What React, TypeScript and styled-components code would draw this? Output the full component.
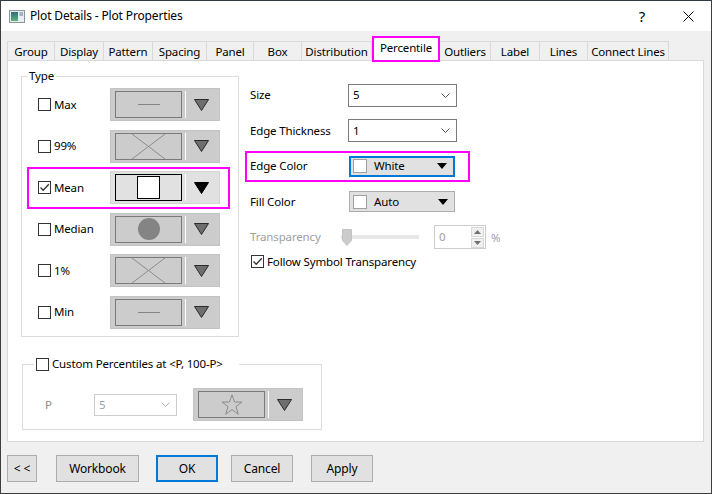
import React from "react";
import styled, { createGlobalStyle } from "styled-components";

const MAGENTA = "#ff00ff";
const FOCUS = "#0078d7";

const GlobalStyle = createGlobalStyle`
  html, body {
    margin: 0;
    padding: 0;
    background: #ffffff;
  }
  body {
    font-family: "Noto Sans", "Liberation Sans", sans-serif;
    font-size: 11.5px;
    letter-spacing: -0.15px;
    color: #000;
  }
  * {
    box-sizing: border-box;
  }
`;

const Window = styled.div`
    width: 712px;
    height: 494px;
    display: flex;
    flex-direction: column;
    background: #f0f0f0;
    border: 1px solid #3d3d3d;
    border-top-color: #2f3d44;
    overflow: hidden;
`;

const TitleBar = styled.div`
    height: 30px;
    flex-shrink: 0;
    background: #ffffff;
    display: flex;
    align-items: center;
    padding-left: 8px;
`;

const TitleText = styled.span`
    margin-left: 5px;
    flex: 1;
    line-height: 16px;
    font-size: 12px;
`;

const CaptionButton = styled.div`
    width: 46px;
    height: 30px;
    display: flex;
    align-items: center;
    justify-content: center;
    font-size: 15px;
`;

const Body = styled.div`
    flex: 1;
    display: flex;
    flex-direction: column;
    padding: 5px 7px 0 6px;
`;

const TabStrip = styled.div`
    display: flex;
    align-items: flex-end;
    height: 24px;
    position: relative;
    z-index: 1;
`;

const Tab = styled.div<{ $w: number; $first?: boolean }>`
    width: ${(p) => p.$w}px;
    height: 19px;
    border: 1px solid #d9d9d9;
    border-bottom: none;
    border-left-width: ${(p) => (p.$first ? 1 : 0)}px;
    background: #f0f0f0;
    display: flex;
    align-items: center;
    justify-content: center;
    padding-top: 1px;
    line-height: 16px;
    white-space: nowrap;
`;

const ActiveTab = styled.div<{ $w: number }>`
    width: ${(p) => p.$w}px;
    height: 26px;
    margin-bottom: -2px;
    border: 2px solid ${MAGENTA};
    background: #ffffff;
    display: flex;
    align-items: center;
    justify-content: center;
    padding-bottom: 2px;
    line-height: 16px;
`;

const Panel = styled.div`
    height: 382px;
    flex-shrink: 0;
    background: #ffffff;
    border: 1px solid #d9d9d9;
    padding: 7px 0 0 13px;
    display: flex;
    flex-direction: column;
    align-items: flex-start;
`;

const TopSection = styled.div`
    display: flex;
    align-items: flex-start;
`;

const GroupBox = styled.fieldset<{ $w: number }>`
    width: ${(p) => p.$w}px;
    margin: 0;
    border: 1px solid #dcdcdc;
    min-width: 0;
`;

const TypeGroup = styled(GroupBox)`
    padding: 0 8px 3px 5px;
`;

const CustomGroup = styled(GroupBox)`
    margin: 19px 0 0 1px;
    padding: 16px 0 8px 11px;
`;

const Legend = styled.legend<{ $padRight?: number }>`
    padding: 0 ${(p) => p.$padRight ?? 2}px 0 2px;
    line-height: 16px;
    display: flex;
    align-items: center;
`;

const TypeRow = styled.div<{ $hl?: boolean }>`
    height: 41.5px;
    display: flex;
    align-items: center;
    padding: ${(p) => (p.$hl ? "0 8px 0 9px" : "0 10px 0 11px")};
    border: ${(p) => (p.$hl ? `2px solid ${MAGENTA}` : "none")};
`;

const CheckLabel = styled.label<{ $disabled?: boolean }>`
    display: flex;
    align-items: center;
    gap: 3px;
    line-height: 16px;
    white-space: nowrap;
    color: ${(p) => (p.$disabled ? "#a0a0a0" : "#000")};
`;

const Box = styled.span`
    width: 13px;
    height: 13px;
    flex-shrink: 0;
    border: 1px solid #333333;
    background: #ffffff;
    display: flex;
    align-items: center;
    justify-content: center;
`;

const Picker = styled.div<{ $on?: boolean }>`
    width: 110px;
    height: 33px;
    margin-left: auto;
    flex-shrink: 0;
    display: flex;
    align-items: center;
    padding: 0 0 0 4px;
    background: ${(p) => (p.$on ? "#e1e1e1" : "#cccccc")};
    border: 1px solid ${(p) => (p.$on ? "#d4d4d4" : "#c3c3c3")};
`;

const Preview = styled.div<{ $on?: boolean }>`
    width: 67px;
    height: 27px;
    border: 1px solid ${(p) => (p.$on ? "#000" : "#7a7a7a")};
    display: flex;
    align-items: center;
    justify-content: center;
`;

const Separator = styled.div`
    width: 1px;
    height: 27px;
    margin-left: 3px;
    background: #ffffff;
`;

const ArrowArea = styled.div`
    flex: 1;
    display: flex;
    align-items: center;
    justify-content: center;
    padding-right: 2px;
`;

const RightCol = styled.div`
    margin: 9.5px 0 0 6px;
    display: flex;
    flex-direction: column;
    width: 225px;
`;

const PropRow = styled.div<{ $hl?: boolean }>`
    height: ${(p) => (p.$hl ? 31 : 35.5)}px;
    margin: ${(p) => (p.$hl ? "2.25px 0" : "0")};
    display: flex;
    align-items: center;
    padding-left: ${(p) => (p.$hl ? 3 : 5)}px;
    border: ${(p) => (p.$hl ? `2px solid ${MAGENTA}` : "none")};
`;

const FollowRow = styled.div`
    height: 13px;
    display: flex;
    align-items: center;
    padding-left: 6px;
`;

const PropLabel = styled.span<{ $disabled?: boolean }>`
    width: 98px;
    flex-shrink: 0;
    line-height: 16px;
    white-space: nowrap;
    color: ${(p) => (p.$disabled ? "#a0a0a0" : "#000")};
`;

const Combo = styled.div<{ $w: number; $h: number; $disabled?: boolean }>`
    width: ${(p) => p.$w}px;
    height: ${(p) => p.$h}px;
    flex-shrink: 0;
    background: #ffffff;
    border: 1px solid ${(p) => (p.$disabled ? "#cccccc" : "#7a7a7a")};
    color: ${(p) => (p.$disabled ? "#a0a0a0" : "#000")};
    display: flex;
    align-items: center;
    justify-content: space-between;
    padding: 0 6px 0 4px;
    line-height: 16px;
`;

const ColorButton = styled.div<{ $focus?: boolean }>`
    width: 106px;
    height: 21px;
    margin-left: 1px;
    flex-shrink: 0;
    background: #e1e1e1;
    border: ${(p) => (p.$focus ? `2px solid ${FOCUS}` : "1px solid #adadad")};
    display: flex;
    align-items: center;
    padding: 0 6px 0 ${(p) => (p.$focus ? 2 : 3)}px;
    line-height: 16px;
`;

const Swatch = styled.span`
    width: 14px;
    height: 14px;
    flex-shrink: 0;
    background: #ffffff;
    border: 1px solid #a0a0a0;
    margin-right: 7px;
`;

const ColorName = styled.span`
    flex: 1;
`;

const Slider = styled.div`
    width: 78px;
    height: 20px;
    margin-left: -7px;
    flex-shrink: 0;
    display: flex;
    align-items: center;
    padding-left: 1px;
    background: linear-gradient(#e7e7e7, #e7e7e7) no-repeat center / 100% 4px;
`;

const Spin = styled.div`
    width: 52px;
    height: 24px;
    margin-left: 15px;
    flex-shrink: 0;
    border: 1px solid #cccccc;
    background: #ffffff;
    display: flex;
    align-items: center;
    padding: 0 1px 0 4px;
    color: #a0a0a0;
    line-height: 16px;
`;

const SpinValue = styled.span`
    flex: 1;
`;

const SpinButtons = styled.div`
    display: flex;
    flex-direction: column;
    gap: 1px;
`;

const SpinButton = styled.div`
    width: 13px;
    height: 10px;
    background: #f0f0f0;
    border: 1px solid #d9d9d9;
    display: flex;
    align-items: center;
    justify-content: center;
`;

const Unit = styled.span`
    margin-left: 5px;
    flex-shrink: 0;
    color: #a0a0a0;
`;

const CustomRow = styled.div`
    display: flex;
    align-items: center;
    height: 33px;
`;

const PLabel = styled.span`
    width: 49px;
    margin-left: 11px;
    color: #8a8a8a;
    line-height: 16px;
`;

const PickerSlot = styled.div`
    margin-left: 16px;
    display: flex;
`;

const Footer = styled.div`
    display: flex;
    padding-top: 13px;
`;

const DlgButton = styled.div<{ $w: number; $ml: number; $def?: boolean }>`
    width: ${(p) => p.$w}px;
    height: 27px;
    margin-left: ${(p) => p.$ml}px;
    background: #e1e1e1;
    border: ${(p) => (p.$def ? `2px solid ${FOCUS}` : "1px solid #adadad")};
    display: flex;
    align-items: center;
    justify-content: center;
    line-height: 16px;
    font-size: 12px;
`;

const tabs = [
    { name: "Group", w: 48 },
    { name: "Display", w: 49 },
    { name: "Pattern", w: 49 },
    { name: "Spacing", w: 54 },
    { name: "Panel", w: 47 },
    { name: "Box", w: 48 },
    { name: "Distribution", w: 70 },
    { name: "Percentile", w: 68, active: true },
    { name: "Outliers", w: 51 },
    { name: "Label", w: 49 },
    { name: "Lines", w: 48 },
    { name: "Connect Lines", w: 81 },
];

type Sym = "line" | "cross" | "square" | "circle" | "star";

const typeRows: { label: string; sym: Sym; on?: boolean }[] = [
    { label: "Max", sym: "line" },
    { label: "99%", sym: "cross" },
    { label: "Mean", sym: "square", on: true },
    { label: "Median", sym: "circle" },
    { label: "1%", sym: "cross" },
    { label: "Min", sym: "line" },
];

const AppIcon = () => (
    <svg width="16" height="13" viewBox="0 0 16 13">
        <defs>
            <linearGradient id="ig" x1="0" y1="0" x2="0" y2="1">
                <stop offset="0" stopColor="#2f6d7a" />
                <stop offset="1" stopColor="#5fb07a" />
            </linearGradient>
        </defs>
        <rect x="0.5" y="0.5" width="15" height="12" fill="#e9edef" stroke="#8a969b" />
        <rect x="2" y="2" width="7" height="9" fill="url(#ig)" />
        <rect x="10.5" y="2" width="3.5" height="4" fill="#9fb4bd" />
    </svg>
);

const CloseIcon = () => (
    <svg width="11" height="11" viewBox="0 0 11 11">
        <path d="M0.5 0.5 L10.5 10.5 M10.5 0.5 L0.5 10.5" stroke="#000" strokeWidth="1" />
    </svg>
);

const CheckMark = () => (
    <svg width="11" height="11" viewBox="0 0 11 11">
        <path d="M1.5 5.5 L4.2 8.2 L9.8 2.2" fill="none" stroke="#333" strokeWidth="1.3" />
    </svg>
);

const Check = ({ checked }: { checked?: boolean }) => <Box>{checked && <CheckMark />}</Box>;

const DropTriangle = ({ on }: { on?: boolean }) => (
    <svg width="15" height="12" viewBox="0 0 15 12">
        <polygon
            points="0.5,0.5 14.5,0.5 7.5,11.5"
            fill={on ? "#000" : "#6e6e6e"}
            stroke={on ? "#000" : "#2a2a2a"}
            strokeWidth="1"
        />
    </svg>
);

const SmallTriangle = () => (
    <svg width="10" height="6" viewBox="0 0 10 6">
        <polygon points="0,0 10,0 5,6" fill="#000" />
    </svg>
);

const Chevron = ({ color }: { color: string }) => (
    <svg width="9" height="5" viewBox="0 0 9 5">
        <path d="M0.5 0.5 L4.5 4.5 L8.5 0.5" fill="none" stroke={color} strokeWidth="1" />
    </svg>
);

const SymbolShape = ({ sym }: { sym: Sym }) => {
    switch (sym) {
        case "line":
            return (
                <svg width="22" height="3" viewBox="0 0 22 3">
                    <line x1="0" y1="1.5" x2="22" y2="1.5" stroke="#858585" strokeWidth="1" />
                </svg>
            );
        case "cross":
            return (
                <svg width="33" height="25" viewBox="0 0 33 25">
                    <path d="M0 0 L33 25 M33 0 L0 25" stroke="#8c8c8c" strokeWidth="1" />
                </svg>
            );
        case "square":
            return (
                <svg width="23" height="23" viewBox="0 0 23 23">
                    <rect x="0.5" y="0.5" width="22" height="22" fill="#fff" stroke="#000" />
                </svg>
            );
        case "circle":
            return (
                <svg width="22" height="22" viewBox="0 0 22 22">
                    <circle cx="11" cy="11" r="11" fill="#848484" />
                </svg>
            );
        case "star":
            return (
                <svg width="22" height="21" viewBox="0 0 22 21">
                    <polygon
                        points="11,0.8 13.5,8 21,8 15,12.6 17.3,20.2 11,15.6 4.7,20.2 7,12.6 1,8 8.5,8"
                        fill="none"
                        stroke="#8c8c8c"
                        strokeWidth="1"
                    />
                </svg>
            );
    }
};

const SymbolPicker = ({ sym, on }: { sym: Sym; on?: boolean }) => (
    <Picker $on={on}>
        <Preview $on={on}>
            <SymbolShape sym={sym} />
        </Preview>
        <Separator />
        <ArrowArea>
            <DropTriangle on={on} />
        </ArrowArea>
    </Picker>
);

const SliderThumb = () => (
    <svg width="10" height="17" viewBox="0 0 10 17">
        <polygon points="0.5,0.5 9.5,0.5 9.5,11.5 5,16.5 0.5,11.5" fill="#cccccc" stroke="#c2c2c2" />
    </svg>
);

const SpinArrow = ({ up }: { up?: boolean }) => (
    <svg width="7" height="4" viewBox="0 0 7 4">
        <polygon points={up ? "0,4 7,4 3.5,0" : "0,0 7,0 3.5,4"} fill="#707070" />
    </svg>
);

export default function App() {
    return (
        <>
            <GlobalStyle />
            <Window>
                <TitleBar>
                    <AppIcon />
                    <TitleText>Plot Details - Plot Properties</TitleText>
                    <CaptionButton>?</CaptionButton>
                    <CaptionButton>
                        <CloseIcon />
                    </CaptionButton>
                </TitleBar>
                <Body>
                    <TabStrip>
                        {tabs.map((t, i) =>
                            t.active ? (
                                <ActiveTab key={t.name} $w={t.w}>
                                    {t.name}
                                </ActiveTab>
                            ) : (
                                <Tab key={t.name} $w={t.w} $first={i === 0}>
                                    {t.name}
                                </Tab>
                            )
                        )}
                    </TabStrip>
                    <Panel>
                        <TopSection>
                            <TypeGroup $w={218}>
                                <Legend>Type</Legend>
                                {typeRows.map((r) => (
                                    <TypeRow key={r.label} $hl={r.on}>
                                        <CheckLabel>
                                            <Check checked={r.on} />
                                            {r.label}
                                        </CheckLabel>
                                        <SymbolPicker sym={r.sym} on={r.on} />
                                    </TypeRow>
                                ))}
                            </TypeGroup>
                            <RightCol>
                                <PropRow>
                                    <PropLabel>Size</PropLabel>
                                    <Combo $w={109} $h={23}>
                                        5
                                        <Chevron color="#555" />
                                    </Combo>
                                </PropRow>
                                <PropRow>
                                    <PropLabel>Edge Thickness</PropLabel>
                                    <Combo $w={109} $h={23}>
                                        1
                                        <Chevron color="#555" />
                                    </Combo>
                                </PropRow>
                                <PropRow $hl>
                                    <PropLabel>Edge Color</PropLabel>
                                    <ColorButton $focus>
                                        <Swatch />
                                        <ColorName>White</ColorName>
                                        <SmallTriangle />
                                    </ColorButton>
                                </PropRow>
                                <PropRow>
                                    <PropLabel>Fill Color</PropLabel>
                                    <ColorButton>
                                        <Swatch />
                                        <ColorName>Auto</ColorName>
                                        <SmallTriangle />
                                    </ColorButton>
                                </PropRow>
                                <PropRow>
                                    <PropLabel $disabled>Transparency</PropLabel>
                                    <Slider>
                                        <SliderThumb />
                                    </Slider>
                                    <Spin>
                                        <SpinValue>0</SpinValue>
                                        <SpinButtons>
                                            <SpinButton>
                                                <SpinArrow up />
                                            </SpinButton>
                                            <SpinButton>
                                                <SpinArrow />
                                            </SpinButton>
                                        </SpinButtons>
                                    </Spin>
                                    <Unit>%</Unit>
                                </PropRow>
                                <FollowRow>
                                    <CheckLabel>
                                        <Check checked />
                                        Follow Symbol Transparency
                                    </CheckLabel>
                                </FollowRow>
                            </RightCol>
                        </TopSection>
                        <CustomGroup $w={300}>
                            <Legend $padRight={16}>
                                <CheckLabel>
                                    <Check />
                                    Custom Percentiles at &lt;P, 100-P&gt;
                                </CheckLabel>
                            </Legend>
                            <CustomRow>
                                <PLabel>P</PLabel>
                                <Combo $w={83} $h={22} $disabled>
                                    5
                                    <Chevron color="#b5b5b5" />
                                </Combo>
                                <PickerSlot>
                                    <SymbolPicker sym="star" />
                                </PickerSlot>
                            </CustomRow>
                        </CustomGroup>
                    </Panel>
                    <Footer>
                        <DlgButton $w={30} $ml={0}>
                            &lt; &lt;
                        </DlgButton>
                        <DlgButton $w={83} $ml={19}>
                            Workbook
                        </DlgButton>
                        <DlgButton $w={62} $ml={17} $def>
                            OK
                        </DlgButton>
                        <DlgButton $w={62} $ml={13}>
                            Cancel
                        </DlgButton>
                        <DlgButton $w={62} $ml={18}>
                            Apply
                        </DlgButton>
                    </Footer>
                </Body>
            </Window>
        </>
    );
}
